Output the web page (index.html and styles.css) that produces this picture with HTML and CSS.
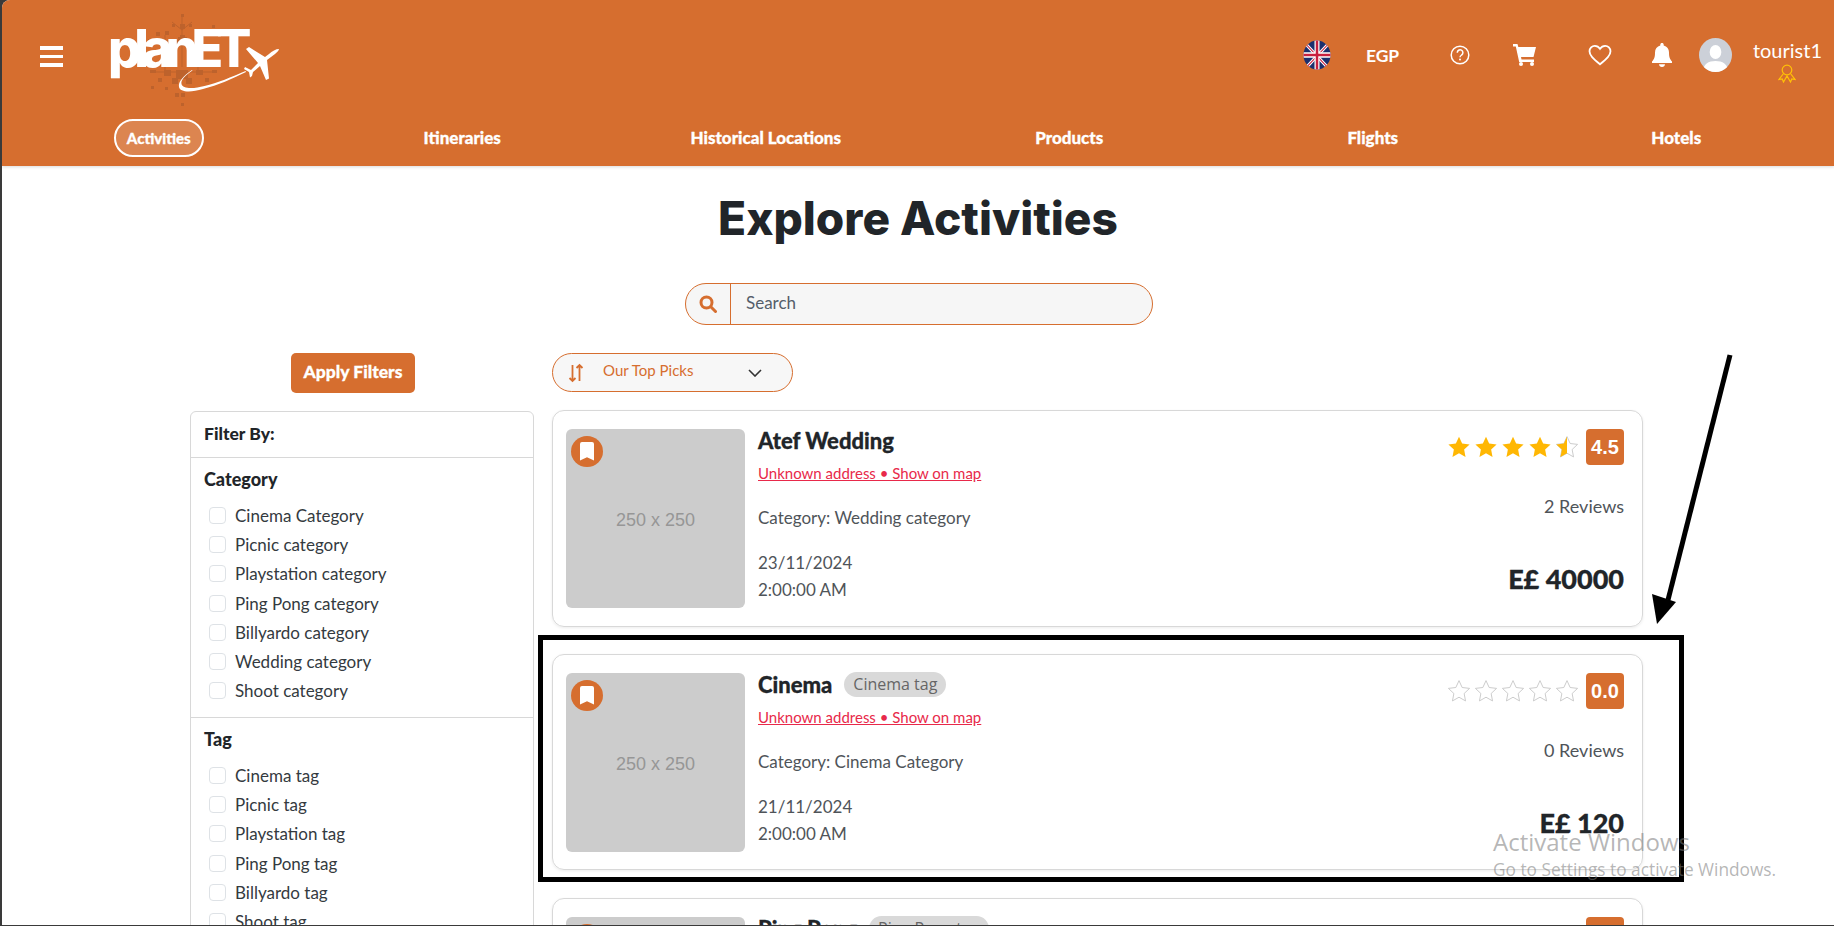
FILE: index.html
```html
<!DOCTYPE html>
<html lang="en">
<head>
  <meta charset="UTF-8" />
  <title>Explore Activities</title>
  <link rel="stylesheet" href="styles.css">
</head>
<body>
  <svg width="0" height="0" class="defs">
    <defs>
      <path id="star" d="M11 1.5l2.9 6.3 6.8.8-5 4.7 1.3 6.8-6-3.4-6 3.4 1.3-6.8-5-4.7 6.8-.8z" />
      <path id="mark" d="M0 2a2 2 0 0 1 2-2h10a2 2 0 0 1 2 2v16.5l-7-3.2-7 3.2z" />
      <clipPath id="halfStar"><rect x="0" y="0" width="11" height="22" /></clipPath>
    </defs>
  </svg>

  <div class="page">
    <header class="topbar">
      <div class="top-row">
        <button class="burger"><span></span><span></span><span></span></button>
        <div class="logo">
          <svg class="logo-art" viewBox="140 8 145 105" width="145" height="105">
            <g fill="#bd622c">
              <rect x="181" y="14" width="3" height="3" /><rect x="180" y="24" width="5" height="5" />
              <rect x="172" y="24" width="3" height="3" /><rect x="189" y="24" width="3" height="3" />
              <rect x="180" y="35" width="5" height="6" /><rect x="165" y="31" width="4" height="4" />
              <rect x="196" y="31" width="4" height="4" /><rect x="172" y="41" width="6" height="6" />
              <rect x="187" y="41" width="6" height="6" /><rect x="156" y="32" width="3" height="3" />
              <rect x="212" y="25" width="3" height="3" /><rect x="178" y="37" width="9" height="9" />
              <rect x="148" y="39" width="8" height="4" /><rect x="156" y="32" width="4" height="4" />
              <rect x="204" y="31" width="4" height="4" /><rect x="176" y="70" width="12" height="9" />
              <rect x="164" y="70" width="7" height="6" /><rect x="150" y="70" width="6" height="3" />
              <rect x="196" y="70" width="7" height="5" /><rect x="212" y="70" width="5" height="3" />
              <rect x="158" y="78" width="4" height="4" /><rect x="172" y="78" width="6" height="6" />
              <rect x="186" y="78" width="6" height="6" /><rect x="205" y="78" width="4" height="4" />
              <rect x="151" y="86" width="3" height="3" /><rect x="165" y="87" width="3" height="3" />
              <rect x="175" y="93" width="4" height="4" /><rect x="181" y="93" width="4" height="4" />
              <rect x="181" y="103" width="3" height="3" />
            </g>
            <path d="M182 17v50M165 35v40M198 35v40M172 22l10 8 10-8M150 41h34M150 72h66" stroke="#bd622c" stroke-width="1" fill="none" />
            <path d="M192 70c-9 6-14 12-13 17 1 5 11 6 24 2 15-4 29-10 43-17l-.5-1c-14 6-28 12-41 15-11 3-22 3-23-2-1-4 4-9 11-13.500z" fill="#fff" />
            <path d="M279 49c-3 0-7 2-10 5l-4 3-16-10-3 2 12 14-7 7-6-3-1 2 5 3 1 5.500 2-1.500 1-4 7-6 6 14 3-1.500-2-18.500 8-6c3-2.500 4-4 4-5z" fill="#fff" />
          </svg>
          <span class="logo-text">planET</span>
        </div>
        <div class="top-right">
          <svg class="flag" viewBox="0 0 28 28" width="28" height="30" preserveAspectRatio="none">
            <clipPath id="flagClip"><circle cx="14" cy="14" r="13.5" /></clipPath>
            <g clip-path="url(#flagClip)">
              <rect width="28" height="28" fill="#1b2f6e" />
              <path d="M0 1L27 28M28 1L1 28" stroke="#fff" stroke-width="3" />
              <path d="M0 1L27 28M28 1L1 28" stroke="#c8203f" stroke-width="1" />
              <path d="M14 0v28M0 14h28" stroke="#fff" stroke-width="5" />
              <path d="M14 0v28M0 14h28" stroke="#c8203f" stroke-width="2.500" />
            </g>
          </svg>
          <span class="currency">EGP</span>
          <svg class="ic-help" viewBox="0 0 20 20" width="20" height="20">
            <circle cx="10" cy="10" r="8.8" fill="none" stroke="#fff" stroke-width="1.5" />
            <path d="M7.3 7.7a2.8 2.8 0 1 1 4.300 2.300c-1 .7-1.600 1.200-1.600 2.300" fill="none" stroke="#fff" stroke-width="1.5" />
            <circle cx="10" cy="14.6" r="1" fill="#fff" />
          </svg>
          <svg class="ic-cart" viewBox="0 0 23 22" width="23" height="22">
            <path d="M0 0h4.500l.8 3H23l-2.500 10H8l.5 2.500H21V18H6.200L2.800 2.500H0z" fill="#fff" />
            <circle cx="8" cy="20" r="2" fill="#fff" /><circle cx="19" cy="20" r="2" fill="#fff" />
          </svg>
          <svg class="ic-heart" viewBox="0 0 24 22" width="24" height="22">
            <path d="M12 20.300C5 14.500 1.500 11.300 1.500 7.200 1.500 4 4 1.800 6.800 1.800c2.100 0 4 1.100 5.200 3 1.200-1.900 3.100-3 5.200-3 2.800 0 5.300 2.200 5.300 5.400 0 4.100-3.500 7.300-10.500 13.100z" fill="none" stroke="#fff" stroke-width="1.8" />
          </svg>
          <svg class="ic-bell" viewBox="0 0 20 24" width="20" height="24">
            <path d="M10 0c1 0 1.700.7 1.700 1.700v.7c3.300.8 5.300 3.500 5.300 7 0 5 1 6.800 3 9V20H0v-1.600c2-2.200 3-4 3-9 0-3.500 2-6.200 5.300-7v-.7C8.300.7 9 0 10 0zM7 21.200h6c0 1.500-1.300 2.800-3 2.800s-3-1.300-3-2.800z" fill="#fff" />
          </svg>
          <svg class="avatar" viewBox="0 0 34 34" width="33" height="34" preserveAspectRatio="none">
            <clipPath id="avatarClip"><circle cx="17" cy="17" r="17" /></clipPath>
            <g clip-path="url(#avatarClip)">
              <rect width="34" height="34" fill="#ccd0d8" />
              <ellipse cx="17" cy="14" rx="6" ry="7" fill="#fff" />
              <path d="M4 34c0-8 6-11 13-11s13 3 13 11z" fill="#fff" />
            </g>
          </svg>
          <div class="user">
            <span class="user-name">tourist1</span>
            <svg class="medal" viewBox="0 0 18 19" width="18" height="19">
              <g fill="none" stroke="#ffc107" stroke-width="1.2">
                <circle cx="9" cy="6" r="4.8" />
                <path d="M5.500 9.500L1 15.500l3.200-.5 1.300 3 3.500-6 3.500 6 1.300-3 3.200.5-4.500-6" />
              </g>
            </svg>
          </div>
        </div>
      </div>
      <nav class="nav">
        <a class="nav-item"><span class="nav-active">Activities</span></a>
        <a class="nav-item">Itineraries</a>
        <a class="nav-item">Historical Locations</a>
        <a class="nav-item">Products</a>
        <a class="nav-item">Flights</a>
        <a class="nav-item">Hotels</a>
      </nav>
    </header>

    <main class="content">
      <h1 class="title">Explore Activities</h1>

      <div class="search">
        <span class="search-icon">
          <svg viewBox="0 0 18 18" width="18" height="18">
            <circle cx="7.5" cy="7.5" r="5.5" fill="none" stroke="#d66e2f" stroke-width="3" />
            <path d="M11.800 11.800l4.700 4.700" stroke="#d66e2f" stroke-width="3" stroke-linecap="round" />
          </svg>
        </span>
        <span class="search-text">Search</span>
      </div>

      <div class="columns">
        <aside class="side">
          <button class="apply">Apply Filters</button>
          <div class="filters">
            <div class="filter-head">Filter By:</div>
            <div class="filter-group">
              <div class="filter-title">Category</div>
              <label class="check"><i></i>Cinema Category</label>
              <label class="check"><i></i>Picnic category</label>
              <label class="check"><i></i>Playstation category</label>
              <label class="check"><i></i>Ping Pong category</label>
              <label class="check"><i></i>Billyardo category</label>
              <label class="check"><i></i>Wedding category</label>
              <label class="check"><i></i>Shoot category</label>
            </div>
            <div class="filter-group">
              <div class="filter-title">Tag</div>
              <label class="check"><i></i>Cinema tag</label>
              <label class="check"><i></i>Picnic tag</label>
              <label class="check"><i></i>Playstation tag</label>
              <label class="check"><i></i>Ping Pong tag</label>
              <label class="check"><i></i>Billyardo tag</label>
              <label class="check"><i></i>Shoot tag</label>
            </div>
          </div>
        </aside>

        <section class="list">
          <div class="sort">
            <svg viewBox="0 0 16 20" width="16" height="20">
              <path d="M4.500 2v16M1.500 15l3 3 3-3M11.500 18V2M8.500 5l3-3 3 3" fill="none" stroke="#d66e2f" stroke-width="1.8" />
            </svg>
            <span class="sort-text">Our Top Picks</span>
            <svg class="sort-caret" viewBox="0 0 14 8" width="14" height="8">
              <path d="M1 1l6 6 6-6" fill="none" stroke="#333" stroke-width="1.6" />
            </svg>
          </div>

          <article class="card">
            <div class="thumb">
              <span class="save"><svg viewBox="0 0 14 19" width="14" height="19"><use href="#mark" fill="#fff" /></svg></span>
              250 x 250
            </div>
            <div class="info">
              <div class="name-row"><h2 class="name">Atef Wedding</h2></div>
              <a class="addr">Unknown address • Show on map</a>
              <p class="cat">Category: Wedding category</p>
              <p class="when">23/11/2024<br>2:00:00 AM</p>
            </div>
            <div class="side-info">
              <div class="rating">
                <svg class="star" viewBox="0 0 22 22"><use href="#star" class="on" /></svg>
                <svg class="star" viewBox="0 0 22 22"><use href="#star" class="on" /></svg>
                <svg class="star" viewBox="0 0 22 22"><use href="#star" class="on" /></svg>
                <svg class="star" viewBox="0 0 22 22"><use href="#star" class="on" /></svg>
                <svg class="star" viewBox="0 0 22 22"><use href="#star" class="off" /><use href="#star" class="on" clip-path="url(#halfStar)" /></svg>
                <span class="score">4.5</span>
              </div>
              <div class="reviews">2 Reviews</div>
              <div class="price">E£ 40000</div>
            </div>
          </article>

          <article class="card card-second">
            <div class="thumb">
              <span class="save"><svg viewBox="0 0 14 19" width="14" height="19"><use href="#mark" fill="#fff" /></svg></span>
              250 x 250
            </div>
            <div class="info">
              <div class="name-row"><h2 class="name">Cinema</h2><span class="tag">Cinema tag</span></div>
              <a class="addr">Unknown address • Show on map</a>
              <p class="cat">Category: Cinema Category</p>
              <p class="when">21/11/2024<br>2:00:00 AM</p>
            </div>
            <div class="side-info">
              <div class="rating">
                <svg class="star" viewBox="0 0 22 22"><use href="#star" class="off" /></svg>
                <svg class="star" viewBox="0 0 22 22"><use href="#star" class="off" /></svg>
                <svg class="star" viewBox="0 0 22 22"><use href="#star" class="off" /></svg>
                <svg class="star" viewBox="0 0 22 22"><use href="#star" class="off" /></svg>
                <svg class="star" viewBox="0 0 22 22"><use href="#star" class="off" /></svg>
                <span class="score">0.0</span>
              </div>
              <div class="reviews">0 Reviews</div>
              <div class="price">E£ 120</div>
            </div>
          </article>

          <article class="card card-third">
            <div class="thumb">
              <span class="save"><svg viewBox="0 0 14 19" width="14" height="19"><use href="#mark" fill="#fff" /></svg></span>
            </div>
            <div class="info">
              <div class="name-row"><h2 class="name">Ping Pong</h2><span class="tag">Ping Pong tag</span></div>
            </div>
            <div class="side-info">
              <div class="rating"><span class="score">0.0</span></div>
            </div>
          </article>
        </section>
      </div>
    </main>
  </div>

  <!-- annotation drawn over the screenshot -->
  <div class="callout"></div>
  <svg class="arrow" viewBox="0 0 1834 926" width="1834" height="926">
    <path d="M1730 355L1668 600" stroke="#000" stroke-width="5" fill="none" />
    <path d="M1652 594L1676 602L1657 624z" fill="#000" />
  </svg>
  <div class="watermark">
    <div class="wm-big">Activate Windows</div>
    <div class="wm-small">Go to Settings to activate Windows.</div>
  </div>
</body>
</html>
```

FILE: styles.css
```css
* {
  box-sizing: border-box;
}
html, body {
  height: 926px;
  overflow: hidden;
}
body {
  margin: 0;
  background: #3a3a3a;
  font-family: "Lato", sans-serif;
  color: #212529;
  position: relative;
}
.defs {
  position: absolute;
}
.page {
  margin-left: 2px;
  height: 925px;
  background: #fff;
  border-top-left-radius: 8px;
  overflow: hidden;
}

/* top bar */
.topbar {
  background: #d66e2f;
  height: 166px;
  box-shadow: 0 1px 3px rgba(0, 0, 0, 0.15);
}
.top-row {
  display: flex;
  align-items: flex-start;
  height: 104px;
}
.burger {
  background: none;
  border: 0;
  padding: 0;
  margin: 46px 0 0 38px;
  width: 23px;
  display: flex;
  flex-direction: column;
  gap: 5px;
}
.burger span {
  display: block;
  height: 3.5px;
  background: #fff;
}
.logo {
  position: relative;
  margin-left: 47px;
  width: 170px;
  height: 100px;
}
.logo-art {
  position: absolute;
  left: 30px;
  top: 8px;
}
.logo-text {
  position: absolute;
  left: -2px;
  top: 13px;
  font-family: "Inter", sans-serif;
  font-weight: 800;
  font-size: 52px;
  line-height: 72px;
  letter-spacing: -7px;
  color: #fff;
}
.top-right {
  margin-left: auto;
  display: flex;
  align-items: center;
  height: 110px;
  padding-right: 12px;
}
.flag {
  margin-right: 35px;
}
.currency {
  font-weight: 700;
  font-size: 17.5px;
  color: #fff;
  width: 34px;
  margin-right: 50px;
}
.ic-help {
  margin-right: 43px;
}
.ic-cart {
  margin-right: 52px;
}
.ic-heart {
  margin-right: 40px;
}
.ic-bell {
  margin-right: 27px;
}
.avatar {
  margin-right: 21px;
}
.user {
  display: flex;
  flex-direction: column;
  align-items: center;
  padding-top: 11px;
  color: #fff;
}
.user-name {
  font-size: 20px;
  line-height: 24px;
}
.medal {
  margin-top: 2px;
}
.nav {
  display: grid;
  grid-template-columns: repeat(6, 303.5px);
  padding-left: 5px;
}
.nav-item {
  text-align: center;
  color: #fff;
  font-weight: 900;
  font-size: 17px;
  line-height: 38px;
  margin-top: 15px;
  -webkit-text-stroke: 0.3px #fff;
}
.nav-active {
  display: inline-block;
  width: 90px;
  height: 38px;
  line-height: 34px;
  border: 2px solid #fff;
  border-radius: 19px;
  background: rgba(255, 255, 255, 0.16);
  font-size: 15px;
}

/* main */
.title {
  margin: 26px 0 0;
  text-align: center;
  font-family: "Inter", sans-serif;
  font-weight: 800;
  font-size: 46px;
  line-height: 52px;
}
.search {
  display: flex;
  width: 468px;
  height: 42px;
  margin: 39px 0 0 683px;
  background: #f6f6f6;
  border: 1px solid #d66e2f;
  border-radius: 21px;
}
.search-icon {
  width: 45px;
  display: flex;
  align-items: center;
  justify-content: center;
  border-right: 1px solid #d66e2f;
}
.search-text {
  padding-left: 15px;
  line-height: 38px;
  font-size: 17px;
  color: #555e6a;
}
.columns {
  display: grid;
  grid-template-columns: 344px 1091px;
  column-gap: 18px;
  margin: 28px 0 0 188px;
}
.apply {
  display: block;
  width: 124px;
  height: 40px;
  margin-left: 101px;
  padding: 0 0 4px;
  background: #d66e2f;
  color: #fff;
  border: 0;
  border-radius: 5px;
  font-family: inherit;
  font-weight: 900;
  font-size: 17.5px;
  -webkit-text-stroke: 0.3px #fff;
}
.filters {
  margin-top: 18px;
  border: 1px solid #d8d8d8;
  border-radius: 6px;
}
.filter-head {
  height: 46px;
  padding-left: 13px;
  line-height: 43px;
  font-weight: 900;
  font-size: 17.5px;
  border-bottom: 1px solid #d8d8d8;
}
.filter-group {
  padding: 11px 13px 0;
  height: 260px;
  border-bottom: 1px solid #d8d8d8;
}
.filter-title {
  font-weight: 900;
  font-size: 18px;
  line-height: 20px;
  margin-bottom: 12px;
}
.check {
  display: flex;
  align-items: center;
  height: 29.2px;
  padding-left: 5px;
  font-size: 17px;
  color: #343a40;
}
.check i {
  width: 17px;
  height: 17px;
  margin-right: 9px;
  border: 1px solid #dee2e6;
  border-radius: 4px;
}

/* activity list */
.sort {
  display: flex;
  align-items: center;
  width: 241px;
  height: 39px;
  padding-left: 15px;
  background: #f7f7f7;
  border: 1px solid #d66e2f;
  border-radius: 20px;
}
.sort-text {
  margin: 0 0 5px 19px;
  font-size: 15px;
  color: #d66e2f;
}
.sort-caret {
  margin-left: auto;
  margin-right: 30px;
}
.card {
  display: flex;
  height: 217px;
  margin-top: 18px;
  padding: 18px 18px 18px 13px;
  border: 1px solid #d8d8d8;
  border-radius: 12px;
  box-shadow: 0 1px 3px rgba(0, 0, 0, 0.08);
}
.card-second {
  height: 216px;
  margin-top: 27px;
}
.card-third {
  margin-top: 28px;
}
.thumb {
  position: relative;
  flex: none;
  width: 179px;
  height: 179px;
  padding-top: 3px;
  background: #ccc;
  border-radius: 6px;
  display: flex;
  align-items: center;
  justify-content: center;
  font-family: "Liberation Sans", sans-serif;
  font-size: 18px;
  color: #969696;
}
.save {
  position: absolute;
  left: 5px;
  top: 7px;
  width: 32px;
  height: 31px;
  border-radius: 50%;
  background: #d66e2f;
  display: flex;
  align-items: center;
  justify-content: center;
}
.info {
  flex: 1;
  padding-left: 13px;
}
.name-row {
  display: flex;
  align-items: center;
  height: 26px;
  margin-top: -2px;
}
.name {
  margin: 0;
  font-weight: 900;
  font-size: 22px;
  -webkit-text-stroke: 0.3px #212529;
}
.tag {
  margin-left: 12px;
  padding: 0 9px;
  height: 25px;
  line-height: 25px;
  border-radius: 13px;
  background: #d9d9d9;
  font-family: "Open Sans", sans-serif;
  font-size: 16px;
  color: #666;
}
.addr {
  display: block;
  margin-top: 11px;
  font-size: 15px;
  color: #e8294a;
  text-decoration: underline;
}
.cat {
  margin: 25px 0 0;
  font-size: 17px;
  color: #4f5459;
}
.when {
  margin: 21px 0 0;
  font-size: 17px;
  line-height: 27px;
  color: #4f5459;
}
.side-info {
  display: flex;
  flex-direction: column;
  align-items: flex-end;
}
.rating {
  display: flex;
  align-items: center;
  gap: 3px;
}
.star {
  width: 24px;
  height: 24px;
}
.on {
  fill: #ffb703;
}
.off {
  fill: #fff;
  stroke: #c4c4c4;
  stroke-width: 0.8px;
}
.score {
  width: 38px;
  height: 36px;
  margin-left: 4px;
  background: #d66e2f;
  border-radius: 4px;
  color: #fff;
  font-family: "Liberation Sans", sans-serif;
  font-weight: 700;
  font-size: 20px;
  line-height: 36px;
  text-align: center;
}
.reviews {
  margin-top: 30px;
  font-size: 18px;
  color: #4f5459;
}
.price {
  margin-top: 45px;
  font-weight: 900;
  font-size: 27px;
  -webkit-text-stroke: 0.3px #212529;
}

/* annotation */
.callout {
  position: absolute;
  left: 538px;
  top: 635px;
  width: 1146px;
  height: 247px;
  border: 5px solid #000;
}
.arrow {
  position: absolute;
  left: 0;
  top: 0;
}
.watermark {
  position: absolute;
  left: 1493px;
  top: 826px;
  color: rgba(120, 120, 120, 0.55);
}
.wm-big {
  font-family: "Open Sans", sans-serif;
  font-size: 24px;
  line-height: 32px;
}
.wm-small {
  font-family: "Open Sans", sans-serif;
  font-size: 17.3px;
  line-height: 24px;
}
```
